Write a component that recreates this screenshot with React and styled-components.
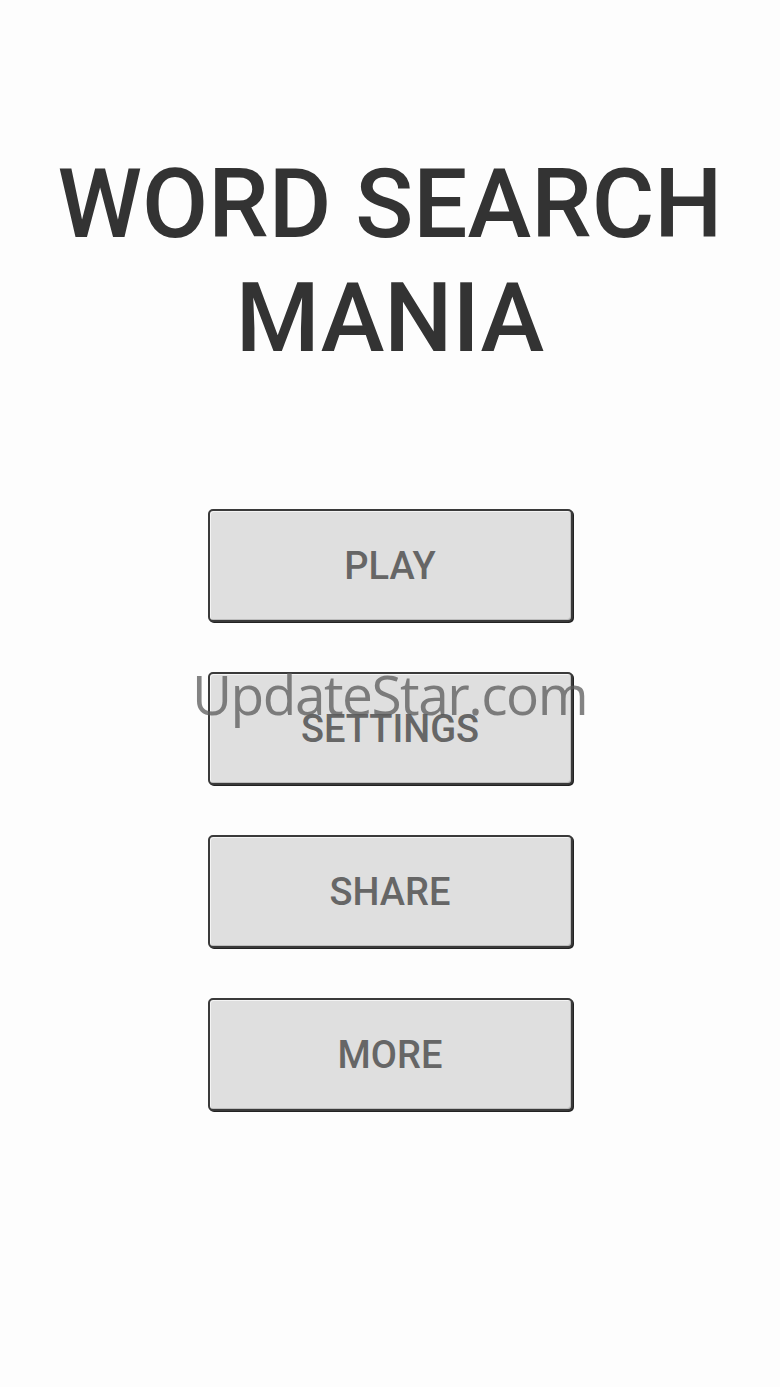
import React from 'react';
import styled, { createGlobalStyle } from 'styled-components';

const GlobalStyle = createGlobalStyle`
  html, body {
    margin: 0;
    padding: 0;
    background: #fdfdfd;
  }
  body {
    font-family: Roboto, "Liberation Sans", sans-serif;
  }
`;

const Screen = styled.div`
  position: relative;
  width: 780px;
  height: 1387px;
  display: flex;
  flex-direction: column;
  align-items: center;
  background: #fdfdfd;
  overflow: hidden;
`;

const Title = styled.h1`
  margin: 147px 0 0;
  font-family: Roboto, "Liberation Sans", sans-serif;
  font-weight: 500;
  font-size: 96px;
  line-height: 114px;
  color: #333333;
  text-align: center;
`;

const Menu = styled.nav`
  margin-top: 134px;
  display: flex;
  flex-direction: column;
  gap: 50px;
`;

const MenuButton = styled.button`
  width: 365px;
  height: 113px;
  display: flex;
  align-items: center;
  justify-content: center;
  padding: 0;
  background: #dfdfdf;
  border: 2px solid #3a3a3a;
  border-radius: 5px;
  box-shadow: inset 1px 1px 0 #f4f4f4, inset -1px -1px 0 #bdbdbd, 1px 1px 0 #222;
  font-family: Roboto, "Liberation Sans", sans-serif;
  font-weight: 500;
  font-size: 38px;
  color: #666666;
  cursor: pointer;
`;

const Watermark = styled.div`
  position: absolute;
  top: 656px;
  left: 192px;
  font-family: "Open Sans", "DejaVu Sans", sans-serif;
  font-weight: 400;
  font-size: 55px;
  letter-spacing: -1.5px;
  color: rgba(90, 90, 90, 0.75);
  pointer-events: none;
  white-space: nowrap;
`;

const items = ['PLAY', 'SETTINGS', 'SHARE', 'MORE'];

export default function App() {
  return (
    <Screen>
      <GlobalStyle />
      <Title>
        WORD SEARCH
        <br />
        MANIA
      </Title>
      <Menu>
        {items.map((label) => (
          <MenuButton key={label}>{label}</MenuButton>
        ))}
      </Menu>
      <Watermark>UpdateStar.com</Watermark>
    </Screen>
  );
}
